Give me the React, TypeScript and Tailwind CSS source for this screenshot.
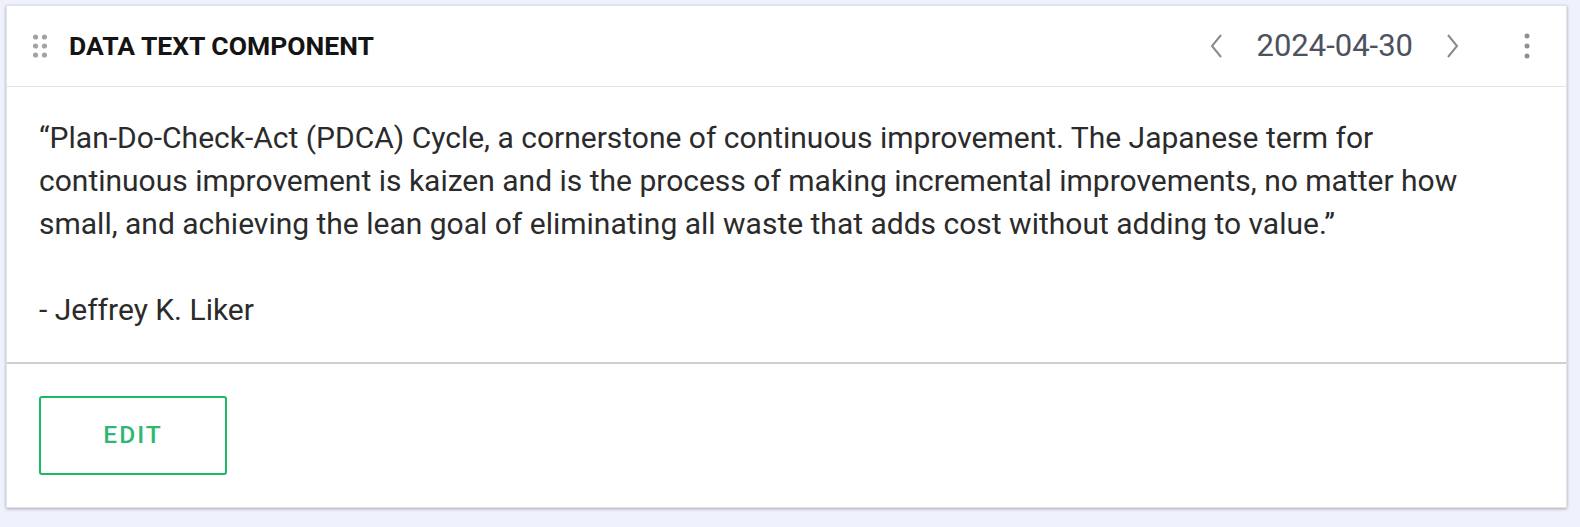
import React from "react";

const quote =
  "\u201cPlan-Do-Check-Act (PDCA) Cycle, a cornerstone of continuous improvement. The Japanese term for continuous improvement is kaizen and is the process of making incremental improvements, no matter how small, and achieving the lean goal of eliminating all waste that adds cost without adding to value.\u201d";

const DragHandle = () => (
  <svg width="14" height="24" viewBox="0 0 14 24" className="text-[#a3a3a3]">
    {[0, 1, 2].map((row) =>
      [0, 1].map((col) => (
        <circle key={`${row}-${col}`} cx={2.5 + col * 9} cy={3 + row * 9} r="2.6" fill="currentColor" />
      ))
    )}
  </svg>
);

const Chevron = ({ dir }: { dir: "left" | "right" }) => (
  <svg width="16" height="28" viewBox="0 0 16 28" fill="none" stroke="#8a8a8a" strokeWidth="2">
    {dir === "left" ? <path d="M12 3 L3 14 L12 25" /> : <path d="M4 3 L13 14 L4 25" />}
  </svg>
);

const Kebab = () => (
  <svg width="6" height="26" viewBox="0 0 6 26" className="text-[#8f8f8f]">
    <circle cx="3" cy="3" r="2.5" fill="currentColor" />
    <circle cx="3" cy="13" r="2.5" fill="currentColor" />
    <circle cx="3" cy="23" r="2.5" fill="currentColor" />
  </svg>
);

export default function App() {
  return (
    <div className="w-[1580px] h-[527px] bg-[#eff1fc] pt-[5px] pl-[6px] font-['Roboto',sans-serif]">
      <div className="w-[1561px] bg-white shadow-[0_1px_3px_rgba(0,0,0,0.3)] border border-[#e3e3e8]">
        {/* header */}
        <div className="h-[81px] flex items-center border-b border-[#e4e4e4] pl-[26px] pr-[36px]">
          <DragHandle />
          <h2 className="ml-[22px] text-[26.5px] font-bold text-[#141414]">DATA TEXT COMPONENT</h2>
          <div className="ml-auto flex items-center">
            <Chevron dir="left" />
            <span className="ml-[31px] mr-[31px] text-[31px] text-[#4d5160]">2024-04-30</span>
            <Chevron dir="right" />
            <div className="ml-[64px]">
              <Kebab />
            </div>
          </div>
        </div>

        {/* body */}
        <div className="border-b-2 border-[#cfcfcf] pt-[29px] pb-[31px] pl-[32px] pr-[56px] text-[30px] leading-[43px] text-[#2b2b2b]">
          <p>{quote}</p>
          <p className="mt-[43px]">- Jeffrey K. Liker</p>
        </div>

        {/* footer */}
        <div className="pt-[32px] pb-[32px] pl-[32px]">
          <button className="w-[188px] h-[79px] border-2 border-[#1cb866] rounded-[3px] text-[24.5px] font-medium tracking-[2px] text-[#2fb874]">
            EDIT
          </button>
        </div>
      </div>
    </div>
  );
}
